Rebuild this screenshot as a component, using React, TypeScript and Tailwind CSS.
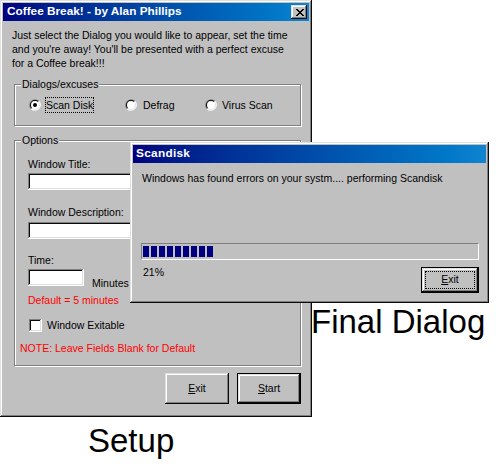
import React from "react";

const raised =
  "shadow-[inset_-1px_-1px_#0a0a0a,inset_1px_1px_#dfdfdf,inset_-2px_-2px_#808080,inset_2px_2px_#ffffff]";
const sunken =
  "shadow-[inset_-1px_-1px_#ffffff,inset_1px_1px_#808080,inset_-2px_-2px_#dfdfdf,inset_2px_2px_#0a0a0a]";

const closeRows = ["11000011", "01100110", "00111100", "00011000", "00111100", "01100110", "11000011"];

const CloseIcon = () => (
  <svg width="8" height="7" viewBox="0 0 8 7" shapeRendering="crispEdges">
    {closeRows.map((row, y) =>
      row.split("").map((c, x) => (c === "1" ? <rect key={`${x}-${y}`} x={x} y={y} width="1" height="1" fill="#000" /> : null))
    )}
  </svg>
);

const Radio = ({ checked = false }: { checked?: boolean }) => (
  <svg width="12" height="12" viewBox="0 0 12 12" className="shrink-0">
    <path d="M10.24 1.76 A6 6 0 0 0 1.76 10.24 Z" fill="#808080" />
    <path d="M1.76 10.24 A6 6 0 0 0 10.24 1.76 Z" fill="#ffffff" />
    <path d="M9.54 2.46 A5 5 0 0 0 2.46 9.54 Z" fill="#0a0a0a" />
    <path d="M2.46 9.54 A5 5 0 0 0 9.54 2.46 Z" fill="#dfdfdf" />
    <circle cx="6" cy="6" r="4" fill="#ffffff" />
    {checked && <circle cx="6" cy="6" r="2" fill="#000000" />}
  </svg>
);

const GroupBox = ({ label, className = "", children }: { label: string; className?: string; children: React.ReactNode }) => (
  <div className={`relative border border-[#808080] shadow-[inset_1px_1px_#ffffff,1px_1px_#ffffff] ${className}`}>
    <span className="absolute -top-[8px] left-[6px] bg-[#c0c0c0] px-[1px] leading-[14px]">{label}</span>
    {children}
  </div>
);

const TextBox = ({ className = "" }: { className?: string }) => (
  <div className={`h-[17px] bg-white ${sunken} ${className}`} />
);

export default function App() {
  return (
    <div className="relative h-[464px] w-[496px] overflow-hidden bg-white font-['Liberation_Sans',Arial,sans-serif] text-[10.5px] text-black">
      {/* Setup window */}
      <div className={`absolute left-0 top-0 flex h-[417px] w-[312px] flex-col bg-[#c0c0c0] p-[3px] ${raised}`}>
        <div className="flex h-[18px] items-center justify-between bg-gradient-to-r from-[#000080] to-[#1084d0] pl-[4px] pr-[2px]">
          <span className="text-[11.8px] font-bold text-white">Coffee Break! - by Alan Phillips</span>
          <div className={`flex h-[14px] w-[16px] items-center justify-center bg-[#c0c0c0] pl-[1px] ${raised}`}>
            <CloseIcon />
          </div>
        </div>

        <p className="ml-[9px] mt-[7px] leading-[14px]">
          Just select the Dialog you would like to appear, set the time
          <br />
          and you're away! You'll be presented with a perfect excuse
          <br />
          for a Coffee break!!!
        </p>

        <GroupBox label="Dialogs/excuses" className="ml-[11px] mt-[14px] h-[42px] w-[287px]">
          <div className="flex h-full items-center pl-[14px]">
            <div className="flex w-[96px] items-center gap-[4px]">
              <Radio checked />
              <span className="border border-dotted border-black leading-[14px]">Scan Disk</span>
            </div>
            <div className="flex w-[80px] items-center gap-[6px]">
              <Radio />
              <span className="leading-[14px]">Defrag</span>
            </div>
            <div className="flex items-center gap-[5px]">
              <Radio />
              <span className="leading-[14px]">Virus Scan</span>
            </div>
          </div>
        </GroupBox>

        <GroupBox label="Options" className="ml-[11px] mt-[14px] h-[226px] w-[287px]">
          <div className="flex flex-col pl-[13px] pt-[16px] leading-[14px]">
            <span>Window Title:</span>
            <TextBox className="mt-[2px] w-[200px]" />
            <span className="mt-[15px]">Window Description:</span>
            <TextBox className="mt-[3px] w-[200px]" />
            <span className="mt-[14px]">Time:</span>
            <div className="mt-[2px] flex items-start">
              <TextBox className="w-[56px]" />
              <span className="ml-[8px] mt-[7px]">Minutes</span>
            </div>
            <span className="mt-[3px] text-[#ff0000]">Default = 5 minutes</span>
            <div className="mt-[11px] flex items-center gap-[5px] pl-[1px]">
              <div className={`h-[13px] w-[13px] bg-white ${sunken}`} />
              <span>Window Exitable</span>
            </div>
            <span className="-ml-[8px] mt-[9px] text-[#ff0000]">NOTE: Leave Fields Blank for Default</span>
          </div>
        </GroupBox>

        <div className="mr-[8px] mt-[7px] flex justify-end gap-[8px]">
          <button className={`flex h-[31px] w-[64px] items-center justify-center bg-[#c0c0c0] ${raised}`}>
            <span><u>E</u>xit</span>
          </button>
          <button className="h-[31px] w-[64px] border border-black bg-[#c0c0c0]">
            <span className={`flex h-full w-full items-center justify-center ${raised}`}>
              <span><u>S</u>tart</span>
            </span>
          </button>
        </div>
      </div>

      {/* Scandisk window */}
      <div className={`absolute left-[130px] top-[142px] flex h-[161px] w-[359px] flex-col bg-[#c0c0c0] p-[3px] ${raised}`}>
        <div className="flex h-[18px] items-center bg-gradient-to-r from-[#000080] to-[#1084d0] pl-[3px]">
          <span className="text-[11.8px] font-bold tracking-[0.3px] text-white">Scandisk</span>
        </div>
        <p className="ml-[9px] mt-[8px] leading-[14px]">Windows has found errors on your systm.... performing Scandisk</p>
        <div className="ml-[8px] mt-[58px] h-[17px] w-[338px] border border-b-white border-l-[#808080] border-r-white border-t-[#808080] pl-[1px] pt-[2px]">
          <div className="flex gap-[2px]">
            {Array.from({ length: 9 }).map((_, i) => (
              <div key={i} className="h-[11px] w-[6px] bg-[#000080]" />
            ))}
          </div>
        </div>
        <div className="flex items-start justify-between">
          <span className="ml-[10px] mt-[5px] leading-[14px]">21%</span>
          <button className="mr-[7px] mt-[7px] h-[26px] w-[58px] border border-black bg-[#c0c0c0]">
            <span className={`flex h-full w-full p-[3px] ${raised}`}>
              <span className="flex flex-1 items-center justify-center border border-dotted border-black">
                <span><u>E</u>xit</span>
              </span>
            </span>
          </button>
        </div>
      </div>

      <span className="absolute left-[311px] top-[305px] text-[33px] leading-[33px]">Final Dialog</span>
      <span className="absolute left-[88px] top-[424px] text-[33px] leading-[33px]">Setup</span>
    </div>
  );
}
